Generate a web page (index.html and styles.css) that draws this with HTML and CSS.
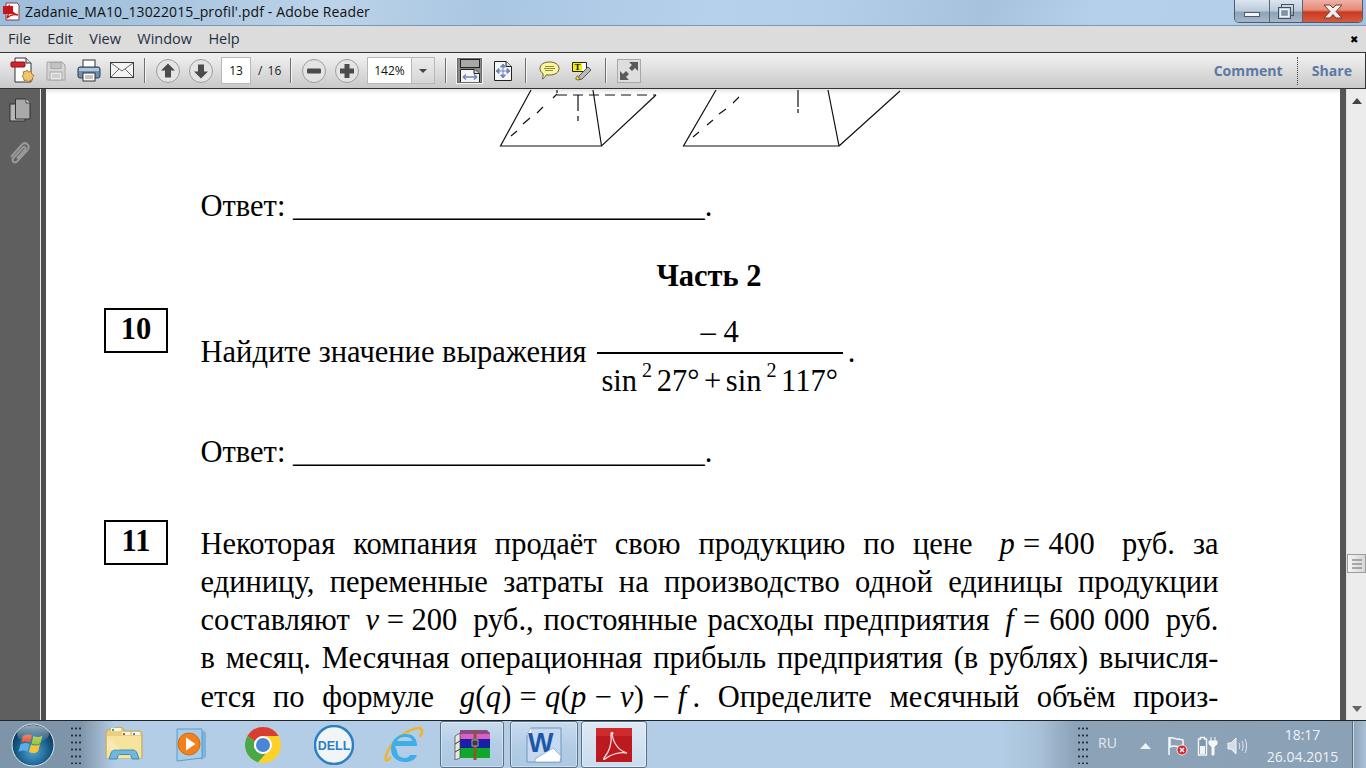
FILE: index.html
```html
<!DOCTYPE html>
<html lang="ru">
<head>
<meta charset="utf-8">
<title>Zadanie_MA10_13022015_profil'.pdf - Adobe Reader</title>
<link rel="stylesheet" href="styles.css">
</head>
<body>
<div class="window">
  <header class="titlebar">
    <svg class="title-icon" width="18" height="19" viewBox="0 0 18 19"><path d="M3 1h11l2 2v15H3z" fill="#fff" stroke="#8a3a3a"/><rect x="0" y="4" width="10" height="8" fill="#c4161c"/><path d="M6 3c1 5 3 9 9 10-4-1-8 0-11 3 2-5 3-9 2-13z" fill="none" stroke="#c4161c" stroke-width="1.4"/></svg>
    <span class="title-text">Zadanie_MA10_13022015_profil'.pdf - Adobe Reader</span>
    <div class="winbtns">
      <div class="winbtn wb-min"><svg width="16" height="5" viewBox="0 0 16 5"><rect x=".5" y=".5" width="15" height="4" fill="#f2f5f8" stroke="#4b5a6b"/></svg></div>
      <div class="winbtn wb-max"><svg width="18" height="17" viewBox="0 0 18 17"><rect x="4.5" y="1.5" width="12" height="11" fill="none" stroke="#46525f" stroke-width="1"/><rect x="1.5" y="4.5" width="12" height="11" fill="#bcc9d6" stroke="#46525f"/><rect x="3.5" y="6.5" width="8" height="7" fill="#7f92a5" stroke="#eef2f5" stroke-width="1.4"/></svg></div>
      <div class="winbtn wb-close"><svg width="24" height="15" viewBox="0 0 24 15"><path d="M3 1h6l3 3 3-3h6l-6 6.500 6 6.500h-6l-3-3.500-3 3.500H3l6-6.500z" fill="#f1eeee" stroke="#6d3a33"/></svg></div>
    </div>
  </header>

  <nav class="menubar">
    <span class="menu-item">File</span><span class="menu-item">Edit</span><span class="menu-item">View</span><span class="menu-item">Window</span><span class="menu-item">Help</span>
    <span class="menu-close">✖</span>
  </nav>

  <div class="toolbar">
    <div class="slot"><svg width="26" height="28" viewBox="0 0 26 28"><path d="M5 1h11l5 5v19H5z" fill="#fff" stroke="#333"/><path d="M16 1v5h5" fill="#ddd" stroke="#333"/><rect x="1" y="5" width="14" height="5" rx="1" fill="#d7222a" stroke="#8e1218"/><path d="M17 13l1.700 2 2.500-.5 .5 2.500 2.300 1.500-1.700 2 .5 2.500-2.500 0-1.800 2-2-1.800-2.500.3-.3-2.500-1.700-1.800 1.700-2-.3-2.500 2.500-.3z" fill="#f1c56d" stroke="#a97c2a"/></svg></div>
    <div class="slot"><svg width="22" height="22" viewBox="0 0 22 22"><path d="M2 2h15l3 3v15H2z" fill="#d5d5d5" stroke="#a6a6a6"/><rect x="6" y="2.500" width="10" height="6" fill="#c3c3c3" stroke="#a6a6a6"/><rect x="5" y="12" width="12" height="8" fill="#e9e9e9" stroke="#a6a6a6"/><path d="M7 15h8M7 17h8" stroke="#b5b5b5"/></svg></div>
    <div class="slot"><svg width="24" height="23" viewBox="0 0 24 23"><rect x="6" y="1" width="12" height="9" fill="#fff" stroke="#333"/><path d="M3 8h18a2 2 0 0 1 2 2v7a2 2 0 0 1-2 2H3a2 2 0 0 1-2-2v-7a2 2 0 0 1 2-2z" fill="#6d8fb3" stroke="#2c3e52"/><path d="M2 9h20v3H2z" fill="#b2c7dd"/><rect x="6" y="14" width="12" height="8" fill="#fff" stroke="#333"/><path d="M8 17h8M8 19h8" stroke="#888"/></svg></div>
    <div class="slot"><svg width="24" height="17" viewBox="0 0 24 17"><rect x=".5" y=".5" width="23" height="15" fill="#f4f4f4" stroke="#3b3b3b"/><path d="M1 1l11 8 11-8M1 15l8-8M23 15l-8-8" fill="none" stroke="#6a6a6a"/></svg></div>
    <div class="sep"></div>
    <div class="slot"><svg class="round" width="24" height="24" viewBox="0 0 24 24"><circle cx="12" cy="12" r="11.500" fill="#e4e4e4" stroke="#9c9c9c"/><path d="M12 4.500l7 7h-4v7H9v-7H5z" fill="#4b4b4b"/></svg></div>
    <div class="slot"><svg class="round" width="24" height="24" viewBox="0 0 24 24"><circle cx="12" cy="12" r="11.500" fill="#e4e4e4" stroke="#9c9c9c"/><path d="M12 19.500l7-7h-4v-7H9v7H5z" fill="#4b4b4b"/></svg></div>
    <div class="page-input">13</div>
    <span class="page-total">/ 16</span>
    <div class="sep sep-page"></div>
    <div class="slot"><svg width="24" height="24" viewBox="0 0 24 24"><circle cx="12" cy="12" r="11.500" fill="#e4e4e4" stroke="#9c9c9c"/><rect x="5" y="9.500" width="14" height="5" rx="1" fill="#4b4b4b"/></svg></div>
    <div class="slot"><svg width="24" height="24" viewBox="0 0 24 24"><circle cx="12" cy="12" r="11.500" fill="#e4e4e4" stroke="#9c9c9c"/><path d="M9.500 5h5v4.500H19v5h-4.500V19h-5v-4.500H5v-5h4.500z" fill="#4b4b4b"/></svg></div>
    <div class="zoom-box"><span class="zoom-val">142%</span><span class="zoom-drop"><svg width="8" height="4" viewBox="0 0 8 4"><path d="M0 0h8L4 4z" fill="#444"/></svg></span></div>
    <div class="sep sep-zoom"></div>
    <div class="fit-btn"><svg width="20" height="24" viewBox="0 0 20 24"><rect x=".5" y=".5" width="19" height="8" fill="#a8a8a8" stroke="#222"/><path d="M.5 10.500H14l5.500 4V23.500H.5z" fill="#f3f3f3" stroke="#222"/><path d="M14 10.500v4h5.500" fill="#ddd" stroke="#222"/><path d="M3 18h14M3 18l3-2.500M3 18l3 2.500M17 18l-3-2.500M17 18l-3 2.500" stroke="#6f86b8" fill="none" stroke-width="1.400"/></svg></div>
    <div class="slot slot-next"><svg width="18" height="20" viewBox="0 0 18 20"><path d="M.5.500H12l5.500 5V19.500H.5z" fill="#f6f6f6" stroke="#222"/><path d="M12 .5v5h5.500" fill="#ddd" stroke="#222"/><path d="M9 4v12M3 10h12M9 3l-2.500 3h5zM9 17l-2.500-3h5zM2 10l3-2.500v5zM16 10l-3-2.500v5z" stroke="#6f86b8" fill="#6f86b8"/></svg></div>
    <div class="sep sep-next"></div>
    <div class="slot"><svg width="21" height="19" viewBox="0 0 21 19"><path d="M10.500 1c5.500 0 9.500 2.600 9.500 6.500S16 14 10.500 14c-1 0-2 0-3-.3C6.500 15.500 5 17.500 3.500 18c.5-1.500 .8-3.500 .5-5.500C2 11.300 1 9.500 1 7.500 1 3.600 5 1 10.500 1z" fill="#fcf59b" stroke="#5f5f3a"/><path d="M6 5.500h9M5 7.500h11M6 9.500h8" stroke="#8f8a3d"/></svg></div>
    <div class="slot"><svg width="21" height="20" viewBox="0 0 21 20"><path d="M.5 1.500h14v9h-14z" fill="#fff" stroke="#222"/><rect x="1" y="2" width="9" height="8" fill="#f7f000"/><text class="t-icon" x="2.500" y="9">T</text><path d="M7 15l9-9 3 3-9 9-4 1z" fill="#b9b9b9" stroke="#555"/><path d="M5.500 14.500l2 3-2 1.500-2-1z" fill="#f0d94a" stroke="#8a7a1a"/></svg></div>
    <div class="sep sep-cmt"></div>
    <div class="full-btn"><svg width="24" height="24" viewBox="0 0 24 24"><rect x=".5" y=".5" width="23" height="23" fill="#dedede" stroke="#a8a8a8"/><path d="M21 3v9l-3-3-3 3-3-3 3-3-3-3zM3 21v-9l3 3 3-3 3 3-3 3 3 3z" fill="#5a5a5a"/></svg></div>
    <div class="tb-right">
      <span class="tb-link">Comment</span>
      <span class="tb-dots"></span>
      <span class="tb-link">Share</span>
    </div>
  </div>

  <main class="workspace">
    <aside class="navpanel">
      <svg class="nav-icon" width="22" height="24" viewBox="0 0 22 24"><rect x="1" y="6" width="15" height="17" fill="#b5b5b5" stroke="#333"/><path d="M6.500 1H17l4 4v16H6.500z" fill="#a9a9a9" stroke="#333"/><path d="M17 1v4h4" fill="#e0e0e0" stroke="#444"/></svg>
      <svg class="nav-icon" width="22" height="24" viewBox="0 0 22 24"><path d="M2 16L13 3.500c3.500-3.500 9 1 5.500 5.500L8 20.500c-2.500 2.500-6-.5-3.500-3.500l9.500-10.500c1.500-1.500 3.500 0 2 2l-8 9" fill="none" stroke="#999" stroke-width="2"/></svg>
    </aside>
    <div class="gutter-l"></div>
    <section class="page">
      <svg class="figures" width="480" height="62" viewBox="0 0 480 62">
        <g fill="none" stroke="#111" stroke-width="1.200" transform="translate(-493 -88)">
          <path d="M531 89l-30.500 56H601.500L656 94M593 89l8.500 56M557 89v3M839 145l61-55M716 89l-32.500 56H839L828 89"/>
          <path d="M557 94h99" stroke-dasharray="10 6"/>
          <path d="M511 135l6-5M523 123l7-6M537 112l6-6M553 97l4-4M693 136l6-5M707 124l6-5M719 113l7-5M733 102l6-6"/>
          <path d="M578 94v16M578 115v5M798 89v17M798 108v4"/>
        </g>
      </svg>

      <p class="answer answer-first">Ответ: ___________________________.</p>
      <h2 class="part">Часть 2</h2>

      <div class="task task-10">
        <div class="task-num">10</div>
        <div class="task-body">
          <p class="formula-line"><span class="ftext">Найдите значение выражения</span><span class="frac"><span class="num">– 4</span><span class="den">sin<sup>2</sup> 27° + sin<sup>2</sup> 117°</span></span><span class="ftext dot">.</span></p>
        </div>
      </div>

      <p class="answer answer-second">Ответ: ___________________________.</p>

      <div class="task task-11">
        <div class="task-num">11</div>
        <div class="task-body task-body-text">
          <p class="line">Некоторая компания продаёт свою продукцию по цене <span class="m m-wide"><i>p</i> = 400</span> руб. за</p>
          <p class="line">единицу, переменные затраты на производство одной единицы продукции</p>
          <p class="line">составляют <span class="m"><i>v</i> = 200</span> руб., постоянные расходы предприятия <span class="m m-f"><i>f</i> = 600 000</span> руб.</p>
          <p class="line">в месяц. Месячная операционная прибыль предприятия (в рублях) вычисля-</p>
          <p class="line">ется по формуле <span class="m m-g"><i>g</i>(<i>q</i>) = <i>q</i>(<i>p</i> − <i>v</i>) − <i>f</i></span>. Определите месячный объём произ-</p>
        </div>
      </div>
    </section>
    <div class="gutter-r"></div>
    <div class="scrollbar">
      <svg class="sb-arrow" width="10" height="6" viewBox="0 0 10 6"><path d="M5 0l5 6H0z" fill="#444"/></svg>
      <div class="sb-thumb"><svg width="12" height="10" viewBox="0 0 12 10"><path d="M1 1h10M1 5h10M1 9h10" stroke="#666"/></svg></div>
      <svg class="sb-arrow sb-down" width="10" height="6" viewBox="0 0 10 6"><path d="M5 6l5-6H0z" fill="#666"/></svg>
    </div>
  </main>

  <footer class="taskbar">
    <div class="orb">
      <svg width="44" height="44" viewBox="0 0 44 44">
        <defs>
          <radialGradient id="orbg" cx=".5" cy=".65" r=".65"><stop offset="0" stop-color="#4fa5d8"/><stop offset=".65" stop-color="#14557f"/><stop offset="1" stop-color="#0a2a45"/></radialGradient>
          <linearGradient id="orbs" x1="0" y1="0" x2="0" y2="1"><stop offset="0" stop-color="#fff" stop-opacity=".6"/><stop offset="1" stop-color="#fff" stop-opacity="0"/></linearGradient>
        </defs>
        <circle cx="22" cy="22" r="21" fill="url(#orbg)" stroke="#dbe8f2"/>
        <path d="M12 13c3-2 6-2 9-.5l-2 7c-3-1.500-6-1.500-9 .5z" fill="#e9542b"/>
        <path d="M22.500 13c3 1.500 6 1.500 9-.5l-2 7.500c-3 2-6 2-9 .5z" fill="#9cc63d"/>
        <path d="M9.500 21.500c3-2 6-2 9-.5l-2 7.500c-3-1.500-6-1.500-9 .5z" fill="#5aaee6"/>
        <path d="M20 21.500c3 1.500 6 1.500 9-.5l-2 7.500c-3 2-6 2-9 .5z" fill="#f7c52d"/>
        <ellipse cx="22" cy="11" rx="16" ry="9" fill="url(#orbs)"/>
      </svg>
    </div>
    <div class="grip"></div>
    <div class="tb-app tb-folder"><svg width="40" height="38" viewBox="0 0 40 38"><path d="M2 7l1-3 12-3 4 1 1 3 16 0 2 2v25H2z" fill="#e9cf7f" stroke="#c4a95c"/><path d="M7 2h10v3H7zM18 6h8v3h-8zM28 6h8v3h-8z" fill="#f7f7f2"/><rect x="8" y="3" width="2" height="2" fill="#55a54a"/><rect x="19" y="7" width="2" height="2" fill="#cf4a3a"/><rect x="29" y="7" width="2" height="2" fill="#3a8ad0"/><path d="M3 10h34v22H3z" fill="#f7e39d"/><path d="M5 33l2-6c1-2 2-3 4-3h18c2 0 3 1 4 3l2 6h-7l-1-3c-.3-1-1-1.500-2-1.500H16c-1 0-1.700.5-2 1.500l-1 3z" fill="#6db8dc" stroke="#3e8cb2"/><path d="M3 11l14 13H3z" fill="#fff" opacity=".25"/></svg></div>
    <div class="tb-app tb-wmp"><svg width="33" height="34" viewBox="0 0 33 34"><path d="M26 2l5 2v25l-5 3z" fill="#7fb3dc"/><path d="M2 1h25v29l-25 3z" fill="#a7cdea" stroke="#5f9ac6"/><circle cx="14" cy="16" r="11" fill="#f2811d" stroke="#d46a10"/><path d="M11 9.500l9.500 6.500-9.500 6.500z" fill="#fff"/></svg></div>
    <div class="tb-app tb-chrome"><svg width="38" height="38" viewBox="0 0 38 38"><circle cx="19" cy="19" r="18" fill="#fcd12a"/><path d="M3.400 10A18 18 0 0 1 34.600 10H19a9 9 0 0 0-8 5z" fill="#d93c33"/><path d="M3.400 10A18 18 0 0 0 14 36.300L21.800 27.500A9 9 0 0 1 11 15z" fill="#4aa84c"/><circle cx="19" cy="19" r="9" fill="#fff"/><circle cx="19" cy="19" r="7" fill="#4a86d6"/></svg></div>
    <div class="tb-app tb-dell"><svg width="40" height="40" viewBox="0 0 40 40"><circle cx="20" cy="20" r="19" fill="#f2f5f8" stroke="#2b7fc2" stroke-width="2.500"/><text class="t-dell" x="20" y="24.500">DELL</text></svg></div>
    <div class="tb-app tb-ie"><svg width="40" height="38" viewBox="0 0 40 38"><path d="M7 31C2 37 0 35 3 27 8 14 24 3 35 2c4 0 4 4 1 9" fill="none" stroke="#f0b429" stroke-width="2.500"/><path d="M11 20h22c0-8-4-12-11-12-9 0-15 7-15 15 0 8 6 13 14 13 6 0 10-2 12-7h-7c-1 2-3 3-5 3-5 0-8-3-8-7zM13 15c1-3 4-4 8-4s7 1 7 4z" fill="#3eaee8" fill-rule="evenodd"/></svg></div>
    <div class="tb-btn tb-btn-rar"><svg width="36" height="30" viewBox="0 0 36 30"><path d="M6 0h27l3 3v6H6z" fill="#8a4a86"/><path d="M6 4h30v5H6z" fill="#d95fc4"/><path d="M5 9h31v9H5z" fill="#1a1fa8"/><path d="M5 18h31v10H5z" fill="#0fa82a"/><path d="M1 6l5-3v8l-5 3zM1 14l5-3v8l-5 3zM1 22l5-3v9l-5 2z" fill="#e8e8e0" stroke="#444" stroke-width=".7"/><rect x="19.500" y="0" width="3" height="30" fill="#8a5a26"/><rect x="18" y="10" width="6" height="6" fill="#3a3a3a" stroke="#ccc" stroke-width=".7"/></svg></div>
    <div class="tb-btn tb-btn-word"><svg width="38" height="36" viewBox="0 0 38 36"><path d="M6 1h30v34H2V8z" fill="#c6d9ef" stroke="#6e97c6"/><path d="M6 1v7H2z" fill="#fff"/><text class="t-word" x="3" y="25">W</text><path d="M10 32l18-11 8 8-1 6H10z" fill="#fff" stroke="#7fa6cf" stroke-width=".8"/></svg></div>
    <div class="tb-btn tb-btn-pdf"><svg width="38" height="36" viewBox="0 0 38 36"><rect x="1" y="1" width="36" height="34" fill="#bd1a1f"/><rect x="1" y="1" width="36" height="8" fill="#cf2a2c"/><path d="M17 6c1 9 6 17 15 20-6-1-14 0-22 6-1 .8-2 0-1-1 5-6 8-15 7-24 0-2 2-2 2 0" fill="none" stroke="#f3dcdc" stroke-width="1.300"/></svg></div>
    <div class="tray">
      <div class="grip grip-tray"></div>
      <span class="lang">RU</span>
      <svg class="tray-arrow" width="11" height="6" viewBox="0 0 11 6"><path d="M5.500 0l5.500 6H0z" fill="#eef3f7"/></svg>
      <svg class="tray-flag" width="20" height="20" viewBox="0 0 20 20"><path d="M1 1v18M2 2c4-1 6 2 9 1l4 1v7c-4 0-6-1-9-1-2 0-3 .5-4 1z" fill="none" stroke="#f4f7fa" stroke-width="1.500"/><circle cx="14" cy="14" r="5" fill="#d8262c" stroke="#fff" stroke-width=".8"/><path d="M12 12l4 4M16 12l-4 4" stroke="#fff" stroke-width="1.400"/></svg>
      <svg class="tray-batt" width="21" height="20" viewBox="0 0 21 20"><path d="M1.500 3h2V1.500h4V3h2v16h-8z" fill="#7f96ab" stroke="#f4f7fa" stroke-width="1.400"/><rect x="3" y="10" width="5" height="8" fill="#eef3f7"/><path d="M12 5h8v3l-3 3v8h-2v-8l-3-3zM14 1v4M18 1v4" fill="#f4f7fa" stroke="#f4f7fa"/></svg>
      <svg class="tray-vol" width="20" height="18" viewBox="0 0 20 18"><path d="M1 6h3l5-5v16l-5-5H1z" fill="#d5dde4" stroke="#eef3f7"/><path d="M12 6c1 2 1 4 0 6M15 4c1.500 3 1.500 7 0 10M18 2c2 4 2 10 0 14" fill="none" stroke="#e3eaf0"/></svg>
      <div class="clock"><span>18:17</span><span>26.04.2015</span></div>
      <div class="showdesk"></div>
    </div>
  </footer>
</div>
</body>
</html>
```
FILE: styles.css
```css
* { box-sizing: border-box; }
html, body { margin: 0; padding: 0; height: 100%; overflow: hidden; }
.window { width: 1366px; height: 768px; display: flex; flex-direction: column; font-family: "Open Sans", "Noto Sans", sans-serif; overflow: hidden; }

/* title bar */
.titlebar { height: 26px; flex: none; display: flex; align-items: center; padding-left: 3px; border-bottom: 1px solid #7f97ae;
  background: linear-gradient(100deg, #9dbddc 0%, #a9c5df 12%, #bcd3e9 24%, #a9c6e2 36%, #b6d1ec 52%, #b3cfea 60%, #a6c2dc 72%, #b5d0ea 80%, #b3cfe9 90%, #a5c0da 100%); }
.title-icon { margin-top: -2px; }
.title-text { margin-left: 4px; font-size: 14px; color: #111; margin-top: -2px; font-family: "Open Sans", sans-serif; letter-spacing: .12px; }
.winbtns { margin-left: auto; margin-right: 3px; align-self: flex-start; display: flex; height: 23px; border: 1px solid #4d5c6c; border-top: 0; border-radius: 0 0 5px 5px; overflow: hidden; }
.winbtn { display: flex; align-items: center; justify-content: center; height: 100%; }
.wb-min { width: 35px; background: linear-gradient(#dce6f0, #b9c9d9 50%, #8ea3b8 55%, #a6b7c8); border-right: 1px solid #58677a; padding-top: 7px; }
.wb-max { width: 33px; background: linear-gradient(#dce6f0, #b9c9d9 50%, #8ea3b8 55%, #a6b7c8); border-right: 1px solid #58677a; }
.wb-close { width: 59px; background: linear-gradient(#f0b1a5, #e58b78 45%, #c93a20 55%, #d85a3f); }

/* menu bar */
.menubar { height: 26px; flex: none; background: #dcdcdc; display: flex; align-items: center; padding-left: 8px; gap: 16.3px; font-size: 14.5px; color: #24303e; }
.menu-item { line-height: 26px; }
.menu-close { margin-left: auto; margin-right: 8px; font-size: 10px; color: #000; }

/* toolbar */
.toolbar { height: 37px; flex: none; display: flex; align-items: center; padding-left: 6px; padding-right: 13px; border: 1px solid #333; border-left: 0; border-width: 1.500px 1px 1.500px 0; background: linear-gradient(#f2f2f2, #e4e4e4 35%, #c9c9c9); }
.slot { width: 33px; height: 30px; display: flex; align-items: center; justify-content: center; flex: none; }
.sep { width: 2px; height: 25px; flex: none; background: #6f6f6f; border-right: 1px solid #f5f5f5; margin-left: 6px; margin-right: 5px; }
.page-input { width: 30px; height: 27px; margin-left: 4px; background: #fff; border: 1px solid #b8b8b8; font-size: 12px; color: #111; display: flex; align-items: center; justify-content: center; flex: none; }
.page-total { margin-left: 7px; width: 23px; flex: none; font-size: 12px; color: #222; white-space: nowrap; word-spacing: 2px; }
.sep-page { margin-left: 9px; }
.zoom-box { width: 68px; height: 27px; margin-left: 4px; background: #fff; border: 1px solid #b8b8b8; display: flex; flex: none; font-size: 12px; color: #111; }
.zoom-val { width: 43px; display: flex; align-items: center; justify-content: center; }
.zoom-drop { flex: 1; display: flex; align-items: center; justify-content: center; background: linear-gradient(#ececec, #d6d6d6); border-left: 1px solid #b8b8b8; }
.sep-zoom { margin-left: 10px; margin-right: 9px; }
.fit-btn { width: 27px; height: 27px; background: #8a8a8a; border: 1px solid #f4f4f4; outline: 1px solid #6a6a6a; outline-offset: -2px; display: flex; align-items: center; justify-content: center; flex: none; }
.slot-next { margin-left: 3px; }
.sep-next { margin-left: 6px; margin-right: 6px; }
.sep-cmt { margin-left: 6px; margin-right: 10px; }
.full-btn { width: 24px; height: 24px; flex: none; }
.full-btn svg { display: block; }
.tb-right { margin-left: auto; display: flex; align-items: center; }
.tb-link { font-size: 14.100px; font-weight: 700; color: #5a79a3; }
.tb-dots { width: 0; height: 28px; border-left: 1px dotted #444; margin: 0 14px; }
.t-icon { font-family: "Liberation Serif", serif; font-weight: 700; font-size: 9px; fill: #111; }

/* workspace */
.workspace { flex: 1; min-height: 0; display: flex; background: #5a5a5a; }
.navpanel { width: 41px; flex: none; background: #5f5f5f; border-right: 1px solid #e8e8e8; display: flex; flex-direction: column; align-items: center; padding-top: 9px; gap: 19px; }
.gutter-l { width: 5px; flex: none; background: #4f4f4f; }
.gutter-r { width: 6px; flex: none; background: #555; }
.page { flex: 1; min-width: 0; background: #fff; color: #000; overflow: hidden; font-family: "Liberation Serif", serif; font-size: 30.500px; line-height: 38.250px; display: flow-root; box-shadow: inset 0 5px 4px -3px rgba(0,0,0,.13); }
.page p { margin: 0; }
.figures { display: block; margin-left: 447px; }
.answer { padding-left: 154.500px; white-space: nowrap; }
.answer-first { margin-top: 36px !important; }
.part { margin: 32px 0 0; padding-left: 32px; font-size: 30.500px; font-weight: 700; line-height: 38px; text-align: center; }
.task { display: flex; align-items: flex-start; padding-left: 58px; }
.task-num { width: 64px; height: 45px; flex: none; border: 2px solid #000; font-weight: 700; font-size: 30.500px; line-height: 39px; text-align: center; }
.task-body { margin-left: 32.500px; width: 1018px; }
.task-body-text { padding-top: 5px; }
.task-10 { margin-top: 13px; }
.formula-line { display: flex; align-items: center; white-space: nowrap; height: 90px; margin-top: 3px !important; }
.ftext { margin-bottom: 8px; }
.frac { display: flex; flex-direction: column; align-items: stretch; width: 246px; margin-left: 10px; text-align: center; }
.num { line-height: 39px; border-bottom: 2px solid #000; }
.den { line-height: 38px; padding-top: 8px; white-space: nowrap; word-spacing: -3px; }
.den sup { font-size: 20px; line-height: 0; vertical-align: 14px; margin-left: 5px; }
.dot { margin-left: 5px; }
.answer-second { margin-top: 32px !important; }
.task-11 { margin-top: 48px; }
.line { text-align: justify; text-align-last: justify; white-space: normal; }
.m { display: inline-block; white-space: nowrap; margin: 0 6px; }
.m-wide { margin: 0 9px; letter-spacing: .3px; }
.m-f { word-spacing: 1.500px; }
.m-g { margin: 0 6px 0 8px; letter-spacing: .3px; }

/* scrollbar */
.scrollbar { width: 20px; flex: none; background: #ececec; display: flex; flex-direction: column; align-items: center; position: relative; padding-top: 9px; border-left: 1px solid #dedede; }
.sb-thumb { position: absolute; top: 465px; left: 0; width: 19px; height: 19px; background: linear-gradient(90deg, #f4f4f4, #d6d6d6); border: 1px solid #9c9c9c; display: flex; align-items: center; justify-content: center; }
.sb-down { margin-top: auto; margin-bottom: 8px; }

/* taskbar */
.taskbar { height: 48px; flex: none; display: flex; align-items: center; border-top: 1px solid #1c2630;
  background: linear-gradient(90deg, #7e94a8 0, #7e94a8 80px, #b3cde6 115px, #b3cde6 1000px, #a8c1d8 1040px, #8ba2b7 1075px, #8aa1b6 1366px); }
.orb { width: 44px; height: 44px; margin-left: 11px; flex: none; }
.orb svg { display: block; }
.grip { width: 12px; height: 39px; margin-left: 15px; flex: none; background-image: radial-gradient(circle, #23303c 1px, transparent 1.200px); background-size: 4px 7px; }
.tb-app { display: flex; align-items: center; justify-content: center; flex: none; height: 100%; }
.tb-app svg { display: block; }
.tb-folder { margin-left: 21px; width: 41px; }
.tb-wmp { margin-left: 31px; width: 33px; }
.tb-chrome { margin-left: 36px; width: 38px; }
.tb-dell { margin-left: 32px; width: 40px; }
.tb-ie { margin-left: 30px; width: 40px; }
.tb-btn { height: 47px; display: flex; align-items: center; justify-content: center; flex: none; border: 1px solid #5b7186; border-radius: 3px; background: linear-gradient(#c9dcee, #b4cde6 50%, #adc8e2); box-shadow: inset 0 0 0 1px rgba(255,255,255,.4); }
.tb-btn-rar { margin-left: 16px; width: 64px; }
.tb-btn-word { margin-left: 6px; width: 68px; }
.tb-btn-pdf { margin-left: 3px; width: 66px; background: linear-gradient(#dde9f4, #c9dcee); }
.t-dell { font-family: "Liberation Sans", sans-serif; font-weight: 700; font-size: 12.500px; fill: #2b7fc2; text-anchor: middle; }
.t-word { font-family: "Liberation Sans", sans-serif; font-weight: 700; font-size: 27px; fill: #1c57ab; }
.tray { margin-left: auto; display: flex; align-items: center; height: 100%; color: #eef3f7; }
.grip-tray { margin-left: 0; }
.lang { margin-left: 9px; width: 37px; font-size: 14px; color: #e2e9ef; margin-top: -5px; }
.tray-arrow { margin-left: 5px; margin-right: 17px; margin-top: 2px; }
.tray-flag, .tray-batt, .tray-vol { flex: none; margin-top: 2px; }
.tray-batt { margin-left: 9px; }
.tray-vol { margin-left: 9px; }
.clock { width: 71px; margin-left: 20px; margin-top: 2px; display: flex; flex-direction: column; align-items: center; font-size: 14px; line-height: 22px; color: #eef3f7; white-space: nowrap; }
.showdesk { width: 14px; height: 47px; margin-left: 14px; background: linear-gradient(90deg, #8ba3b9, #a9c0d5); border-left: 1px solid #566b7e; box-shadow: inset 1px 0 0 #cfdce7; }
```
